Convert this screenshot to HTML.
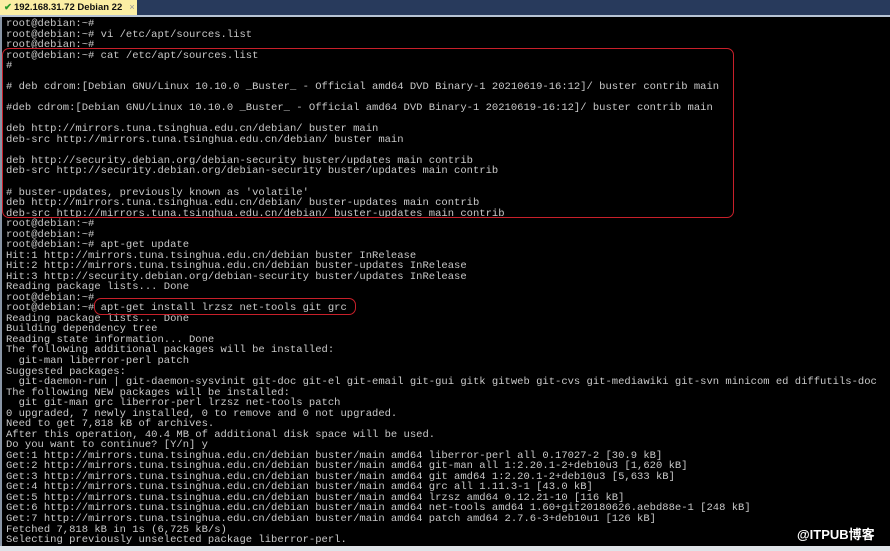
<!DOCTYPE html>
<html><head><meta charset="utf-8"><style>
html,body{margin:0;padding:0;width:890px;height:551px;overflow:hidden;background:#000;}
#bar{position:absolute;left:0;top:0;width:890px;height:15px;background:#283a5c;}
#line{position:absolute;left:0;top:15px;width:890px;height:2px;background:#b8c4d4;}
#tab{position:absolute;left:0;top:0;width:137px;height:15px;background:#fbeea4;font:bold 9.5px "Liberation Sans",sans-serif;color:#111;line-height:15px;white-space:nowrap;overflow:hidden;}
#tab .ck{color:#2a9a2a;margin:0 2px 0 4px;}
#tab .x{color:#999;font-weight:normal;margin-left:7px;}
#lb{position:absolute;left:0;top:17px;width:2px;height:534px;background:#8a96a6;}
#bot{position:absolute;left:0;top:546px;width:890px;height:5px;background:#dfe3e8;}
pre{position:absolute;left:6px;top:19px;margin:0;font:10.52px/10.53px "Liberation Mono",monospace;color:#c9c9c9;white-space:pre;}
.box{position:absolute;border:1.5px solid #c8202a;border-radius:7px;}
#wm{position:absolute;left:797px;top:524px;color:#fff;font:bold 13px "Liberation Sans","Noto Sans CJK SC",sans-serif;}
</style></head><body>
<div id="bar"></div><div id="line"></div>
<div id="tab"><span class="ck">✔</span>192.168.31.72 Debian 22<span class="x">×</span></div>
<div id="lb"></div>
<pre>root@debian:~#
root@debian:~# vi /etc/apt/sources.list
root@debian:~#
root@debian:~# cat /etc/apt/sources.list
#

# deb cdrom:[Debian GNU/Linux 10.10.0 _Buster_ - Official amd64 DVD Binary-1 20210619-16:12]/ buster contrib main

#deb cdrom:[Debian GNU/Linux 10.10.0 _Buster_ - Official amd64 DVD Binary-1 20210619-16:12]/ buster contrib main

deb http://mirrors.tuna.tsinghua.edu.cn/debian/ buster main
deb-src http://mirrors.tuna.tsinghua.edu.cn/debian/ buster main

deb http://security.debian.org/debian-security buster/updates main contrib
deb-src http://security.debian.org/debian-security buster/updates main contrib

# buster-updates, previously known as 'volatile'
deb http://mirrors.tuna.tsinghua.edu.cn/debian/ buster-updates main contrib
deb-src http://mirrors.tuna.tsinghua.edu.cn/debian/ buster-updates main contrib
root@debian:~#
root@debian:~#
root@debian:~# apt-get update
Hit:1 http://mirrors.tuna.tsinghua.edu.cn/debian buster InRelease
Hit:2 http://mirrors.tuna.tsinghua.edu.cn/debian buster-updates InRelease
Hit:3 http://security.debian.org/debian-security buster/updates InRelease
Reading package lists... Done
root@debian:~#
root@debian:~# apt-get install lrzsz net-tools git grc
Reading package lists... Done
Building dependency tree
Reading state information... Done
The following additional packages will be installed:
  git-man liberror-perl patch
Suggested packages:
  git-daemon-run | git-daemon-sysvinit git-doc git-el git-email git-gui gitk gitweb git-cvs git-mediawiki git-svn minicom ed diffutils-doc
The following NEW packages will be installed:
  git git-man grc liberror-perl lrzsz net-tools patch
0 upgraded, 7 newly installed, 0 to remove and 0 not upgraded.
Need to get 7,818 kB of archives.
After this operation, 40.4 MB of additional disk space will be used.
Do you want to continue? [Y/n] y
Get:1 http://mirrors.tuna.tsinghua.edu.cn/debian buster/main amd64 liberror-perl all 0.17027-2 [30.9 kB]
Get:2 http://mirrors.tuna.tsinghua.edu.cn/debian buster/main amd64 git-man all 1:2.20.1-2+deb10u3 [1,620 kB]
Get:3 http://mirrors.tuna.tsinghua.edu.cn/debian buster/main amd64 git amd64 1:2.20.1-2+deb10u3 [5,633 kB]
Get:4 http://mirrors.tuna.tsinghua.edu.cn/debian buster/main amd64 grc all 1.11.3-1 [43.0 kB]
Get:5 http://mirrors.tuna.tsinghua.edu.cn/debian buster/main amd64 lrzsz amd64 0.12.21-10 [116 kB]
Get:6 http://mirrors.tuna.tsinghua.edu.cn/debian buster/main amd64 net-tools amd64 1.60+git20180626.aebd88e-1 [248 kB]
Get:7 http://mirrors.tuna.tsinghua.edu.cn/debian buster/main amd64 patch amd64 2.7.6-3+deb10u1 [126 kB]
Fetched 7,818 kB in 1s (6,725 kB/s)
Selecting previously unselected package liberror-perl.</pre>
<div class="box" style="left:2px;top:48px;width:730px;height:168px;"></div>
<div class="box" style="left:94px;top:298px;width:260px;height:15px;"></div>
<div id="wm">@ITPUB博客</div>
<div id="bot"></div>
</body></html>
